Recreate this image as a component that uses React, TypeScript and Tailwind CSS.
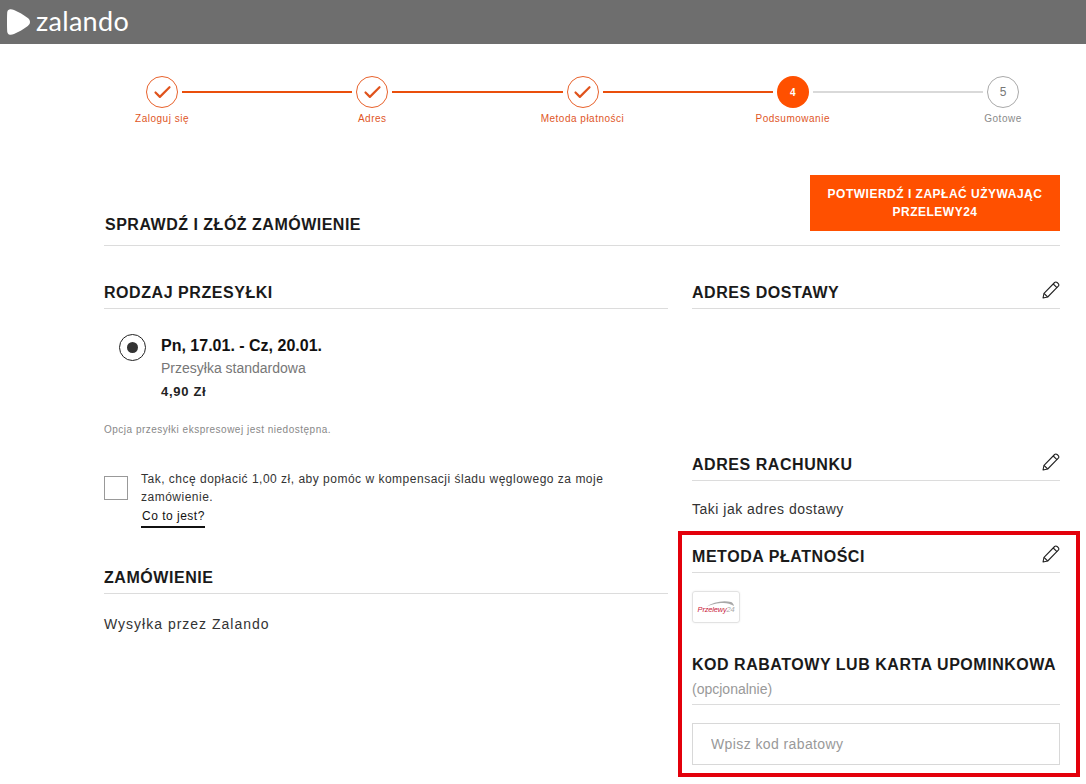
import { Check } from "lucide-react";

const steps = [
  { label: "Zaloguj się", state: "done" },
  { label: "Adres", state: "done" },
  { label: "Metoda płatności", state: "done" },
  { label: "Podsumowanie", state: "current", num: "4" },
  { label: "Gotowe", state: "todo", num: "5" },
];

function Logo() {
  return (
    <div className="flex items-center gap-[6px] pl-[7px]">
      <svg width="23" height="26" viewBox="0 0 23 26" className="block">
        <path d="M3 .3C1.300.6.400 1.800.2 3.600c-.3 6.200-.3 12.600 0 18.800.2 1.800 1.100 3 2.800 3.300 1.300.2 2.600-.2 4-.8 4.800-2 9.600-4.900 13.800-8 1.300-1 2.200-2.300 2.200-3.900s-.9-2.900-2.200-3.900C16.600 6 11.800 3.100 7 1.100 5.600.5 4.300.1 3 .3z" fill="#fff" />
      </svg>
      <span className="-mt-[4px] font-['Lato',sans-serif] text-[27px] leading-none tracking-[0.3px] text-white">zalando</span>
    </div>
  );
}

function PencilIcon() {
  return (
    <svg width="18" height="18" viewBox="0 0 18 18" fill="none" stroke="#222" strokeWidth="1.100" strokeLinejoin="round" className="block">
      <path d="M1 17l1-4.700L12.600 1.500c.7-.7 1.800-.7 2.500 0l1.200 1.200c.7.7.7 1.800 0 2.500L5.700 16z" />
      <path d="M11.200 3l4 3.900M2 12.300L5.700 16" />
    </svg>
  );
}

function Stepper() {
  return (
    <div className="ml-[146px] flex w-[873px] pt-8">
      {steps.map((s, i) => (
        <div key={s.label} className={i < 4 ? "flex flex-1" : "flex"}>
          <div className="flex w-8 flex-col items-center">
            {s.state === "done" && (
              <div className="flex h-8 w-8 items-center justify-center rounded-full border border-[#e8622c]">
                <Check size={21} strokeWidth={2.500} className="text-[#e0531c]" />
              </div>
            )}
            {s.state === "current" && (
              <div className="flex h-8 w-8 items-center justify-center rounded-full bg-[#ff5000] text-[10px] font-bold text-white">{s.num}</div>
            )}
            {s.state === "todo" && (
              <div className="flex h-8 w-8 items-center justify-center rounded-full border border-[#aaa] text-[12px] text-[#777]">{s.num}</div>
            )}
            <span className={"mt-[5px] whitespace-nowrap text-[10px] leading-[12px] tracking-[0.5px] " + (s.state === "todo" ? "text-[#8a8a8a]" : "text-[#e0561f]")}>
              {s.label}
            </span>
          </div>
          {i < 4 && (
            <div className={"mx-1 mt-[15px] h-[2px] flex-1 " + (i < 3 ? "bg-[#ea4f0c]" : "bg-[#d9d9d9]")} />
          )}
        </div>
      ))}
    </div>
  );
}

function SectionHead({ title, edit }: { title: string; edit?: boolean }) {
  return (
    <div className="flex h-[28px] items-start justify-between border-b border-[#dcdcdc]">
      <h2 className="text-[16px] font-bold leading-[24px] tracking-[0.55px] text-[#1a1a1a]">{title}</h2>
      {edit && <PencilIcon />}
    </div>
  );
}

function Przelewy() {
  return (
    <div className="relative flex h-8 w-12 items-center justify-center rounded-[3px] border border-[#e2e2e2] shadow-[0_0_2px_rgba(0,0,0,0.08)]">
      <svg width="30" height="8" viewBox="0 0 30 8" className="absolute left-[12px] top-[8px]">
        <path d="M1 7C8 2 18 0 26 2c1.500.4 2.500 2 3 4-4-2.500-8-3.500-13-3C10 3.500 5 5 1 7z" fill="#a8a8a8" />
      </svg>
      <span className="mt-[6px] text-[7.500px] italic leading-none tracking-[-0.2px] text-[#c8203a]">
        Przelewy<span className="text-[#aaa]">24</span>
      </span>
    </div>
  );
}

export default function App() {
  return (
    <div className="h-[784px] overflow-hidden bg-white font-['Liberation_Sans',Arial,sans-serif]">
      <header className="flex h-11 items-center bg-[#6e6e6e]">
        <Logo />
      </header>
      <Stepper />

      <main className="ml-[104px] mr-[26px]">
        <div className="mt-[51px] flex h-[70px] items-end justify-between border-b border-[#dcdcdc] pb-2">
          <h1 className="pl-[1px] text-[16px] font-bold leading-[24px] tracking-[0.5px] text-[#1a1a1a]">SPRAWDŹ I ZŁÓŻ ZAMÓWIENIE</h1>
          <button className="mb-[6px] h-14 w-[250px] bg-[#ff5000] px-3 text-center text-[12px] font-bold leading-[18px] tracking-[0.5px] text-white">
            POTWIERDŹ I ZAPŁAĆ UŻYWAJĄC PRZELEWY24
          </button>
        </div>

        <div className="mt-[35px] flex gap-6">
          <section className="w-[564px]">
            <SectionHead title="RODZAJ PRZESYŁKI" />
            <div className="mt-[27px] flex pl-[15px]">
              <div className="-mt-[2px] flex h-[27px] w-[27px] items-center justify-center rounded-full border-[1.5px] border-[#222]">
                <div className="h-[11px] w-[11px] rounded-full bg-[#333]" />
              </div>
              <div className="ml-[15px]">
                <p className="text-[16px] font-bold leading-[20px] text-[#111]">Pn, 17.01. - Cz, 20.01.</p>
                <p className="mt-[2px] text-[14px] leading-[20px] text-[#777]">Przesyłka standardowa</p>
                <p className="mt-[4px] text-[13px] font-bold leading-[20px] tracking-[0.7px] text-[#222]">4,90 Zł</p>
              </div>
            </div>
            <p className="mt-[22px] text-[10px] leading-[12px] tracking-[0.5px] text-[#888]">Opcja przesyłki ekspresowej jest niedostępna.</p>
            <div className="mt-[34px] flex">
              <div className="mt-[6px] h-6 w-6 shrink-0 border border-[#999]" />
              <div className="ml-[13px] text-[12px] leading-[18px] tracking-[0.5px] text-[#333]">
                <p>Tak, chcę dopłacić 1,00 zł, aby pomóc w kompensacji śladu węglowego za moje zamówienie.</p>
                <a className="mt-[1px] inline-block border-b-2 border-[#111] pb-[1px] pl-[1px] text-[#111]">Co to jest?</a>
              </div>
            </div>
            <div className="mt-[38px]">
              <SectionHead title="ZAMÓWIENIE" />
            </div>
            <p className="mt-[20px] text-[14px] leading-[20px] tracking-[1px] text-[#333]">Wysyłka przez Zalando</p>
          </section>

          <section className="flex-1">
            <SectionHead title="ADRES DOSTAWY" edit />
            <div className="mt-[144px]">
              <SectionHead title="ADRES RACHUNKU" edit />
            </div>
            <p className="mt-[18px] text-[14px] leading-[20px] tracking-[0.5px] text-[#333]">Taki jak adres dostawy</p>
            <div className="-ml-[14px] -mr-5 mt-[12px] h-[246px] border-4 border-[#e3000b] pl-[10px] pr-4 pt-[10px]">
              <SectionHead title="METODA PŁATNOŚCI" edit />
              <div className="mt-[18px]">
                <Przelewy />
              </div>
              <h2 className="mt-[30px] whitespace-nowrap text-[16px] font-bold leading-[24px] tracking-[0.53px] text-[#1a1a1a]">KOD RABATOWY LUB KARTA UPOMINKOWA</h2>
              <p className="mt-[2px] border-b border-[#dcdcdc] pb-[5px] text-[14px] leading-[20px] text-[#999]">(opcjonalnie)</p>
              <input
                placeholder="Wpisz kod rabatowy"
                className="mt-[18px] h-[42px] w-full border border-[#d8d8d8] px-[18px] text-[14px] tracking-[0.4px] placeholder:text-[#999]"
              />
            </div>
          </section>
        </div>
      </main>
    </div>
  );
}
